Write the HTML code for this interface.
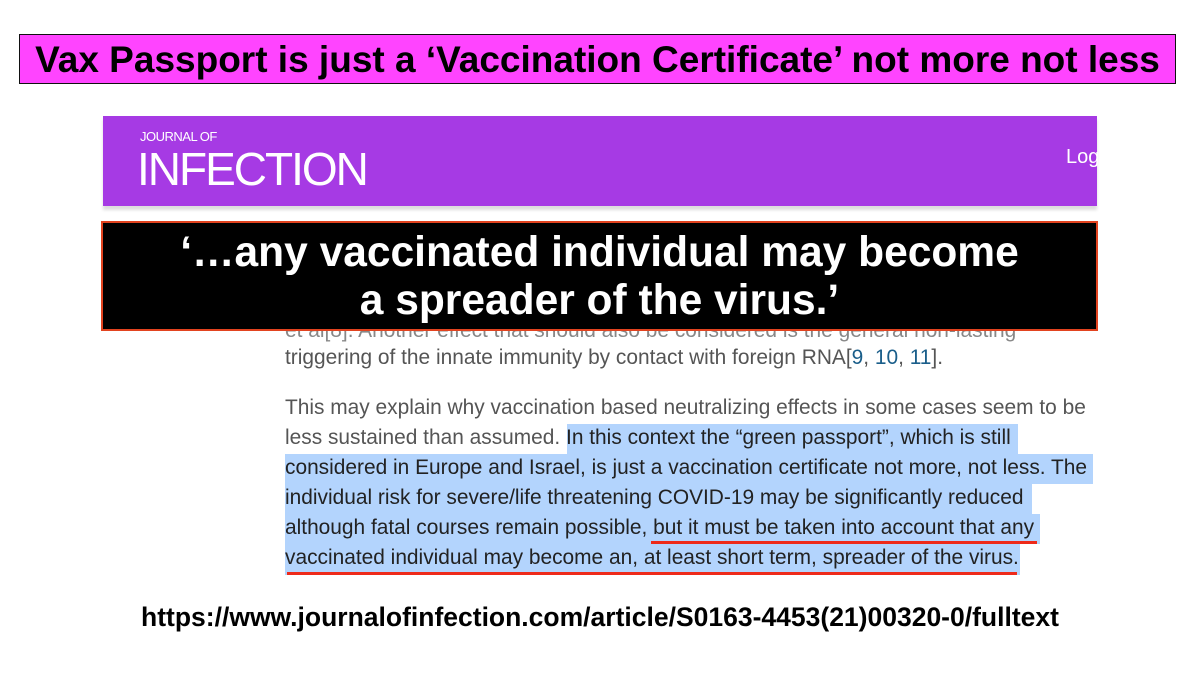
<!DOCTYPE html>
<html><head><meta charset="utf-8"><style>
body{margin:0;width:1200px;height:675px;background:#fff;position:relative;overflow:hidden;font-family:"Liberation Sans",Arial,sans-serif}
.a{position:absolute;white-space:nowrap}
.title{left:19px;top:34px;width:1155px;height:48px;background:#ff44ff;border:1.5px solid #111;font-weight:bold;font-size:37px;line-height:50px;color:#000;text-align:center}
.hdr{left:103px;top:116px;width:994px;height:90px;background:#a63ae4;box-shadow:0 4px 3px #ddd}
.blk{left:101px;top:221px;background:#000;border:2px solid #e2431f;color:#fff;font-weight:bold;font-size:42.5px;line-height:48px;text-align:center;padding-top:6px;box-sizing:border-box;height:110px;width:997px}
.t{font-size:20.9px;color:#555;left:285px;line-height:30px}
.hl{position:absolute;background:#b3d4fd}
.ul{position:absolute;height:3px;background:#ee2a1a}
.d{color:#222}
</style></head><body>
<div class="a title">Vax Passport is just a ‘Vaccination Certificate’ not more not less</div>
<div class="a hdr">
 <div class="a" style="left:37px;top:13px;color:#fff;font-size:13px;letter-spacing:-0.5px;font-weight:300">JOURNAL OF</div>
 <div class="a" style="left:34px;top:26px;color:#fff;font-size:46px;letter-spacing:-2px;font-weight:300">INFECTION</div>
 <div class="a" style="left:963px;top:30px;color:#fff;font-size:20px">Log</div>
</div>
<div class="a t" style="top:316px;color:#888">et al[8]. Another effect that should also be considered is the general non-lasting</div>
<div class="a blk">‘…any vaccinated individual may become<br>a spreader of the virus.’</div>
<div class="a t" style="top:343px">triggering of the innate immunity by contact with foreign RNA[<span style="color:#1a5e8a">9</span>, <span style="color:#1a5e8a">10</span>, <span style="color:#1a5e8a">11</span>].</div>
<div class="hl" style="left:567px;top:424px;width:451px;height:30px"></div>
<div class="hl" style="left:285px;top:454px;width:808px;height:30px"></div>
<div class="hl" style="left:285px;top:484px;width:747px;height:30px"></div>
<div class="hl" style="left:285px;top:514px;width:755px;height:30px"></div>
<div class="hl" style="left:285px;top:544px;width:735px;height:31px"></div>
<div class="a t" style="top:393px">This may explain why vaccination based neutralizing effects in some cases seem to be</div>
<div class="a t" style="top:423px">less sustained than assumed. <span class="d">In this context the “green passport”, which is still</span></div>
<div class="a t d" style="top:453px">considered in Europe and Israel, is just a vaccination certificate not more, not less. The</div>
<div class="a t d" style="top:483px">individual risk for severe/life threatening COVID-19 may be significantly reduced</div>
<div class="a t d" style="top:513px">although fatal courses remain possible, but it must be taken into account that any</div>
<div class="a t d" style="top:543px">vaccinated individual may become an, at least short term, spreader of the virus.</div>
<div class="ul" style="left:651px;top:541px;width:386px"></div>
<div class="ul" style="left:287px;top:572px;width:730px"></div>
<div class="a" style="left:0;width:1200px;top:602px;text-align:center;font-weight:bold;font-size:26.5px;color:#000">https://www.journalofinfection.com/article/S0163-4453(21)00320-0/fulltext</div>
</body></html>
